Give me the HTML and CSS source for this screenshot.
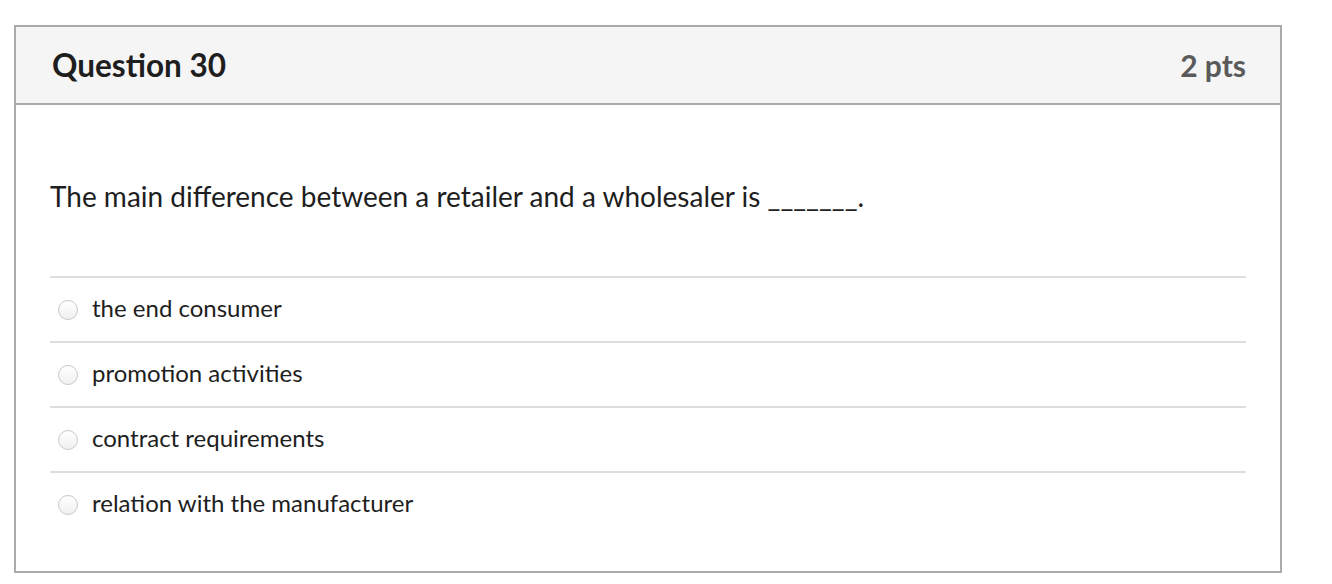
FILE: index.html
```html
<!DOCTYPE html>
<html lang="en">
<head>
<meta charset="utf-8">
<link rel="stylesheet" href="styles.css">
</head>
<body>
<div class="question">
  <div class="q-header">
    <div class="q-title">Question 30</div>
    <div class="q-points">2 pts</div>
  </div>
  <div class="q-body">
    <div class="q-text">The main difference between a retailer and a wholesaler is _______.</div>
    <div class="answers">
      <label class="answer"><span class="radio"></span><span class="answer-text">the end consumer</span></label>
      <label class="answer"><span class="radio"></span><span class="answer-text">promotion activities</span></label>
      <label class="answer"><span class="radio"></span><span class="answer-text">contract requirements</span></label>
      <label class="answer"><span class="radio"></span><span class="answer-text">relation with the manufacturer</span></label>
    </div>
  </div>
</div>
</body>
</html>
```
FILE: styles.css
```css
html, body {
  margin: 0;
  padding: 0;
  background: #ffffff;
}
body {
  font-family: Lato, "Open Sans", "Liberation Sans", sans-serif;
  color: #2d3b45;
}
.question {
  box-sizing: border-box;
  width: 1268px;
  height: 548px;
  margin: 25px 0 0 14px;
  border: 2px solid #aaaaaa;
  display: flex;
  flex-direction: column;
}
.q-header {
  height: 76px;
  background: #f5f5f5;
  border-bottom: 2px solid #aaaaaa;
  display: flex;
  align-items: center;
  justify-content: space-between;
  padding: 0 34px 0 36px;
}
.q-title {
  font-size: 31.5px;
  font-weight: 700;
  color: #1e1e1e;
}
.q-points {
  font-size: 30px;
  font-weight: 700;
  color: #5a5a5a;
}
.q-body {
  padding: 0 34px;
}
.q-text {
  font-size: 28px;
  color: #1e1e1e;
  line-height: 36px;
  padding-top: 73px;
  padding-bottom: 62px;
}
.answers {
  display: flex;
  flex-direction: column;
}
.answer {
  box-sizing: border-box;
  display: flex;
  align-items: center;
  height: 65px;
  padding-bottom: 4px;
  border-top: 2px solid #dddddd;
  color: #1e1e1e;
  font-size: 24px;
}
.radio {
  box-sizing: border-box;
  width: 20px;
  height: 20px;
  border-radius: 50%;
  border: 1px solid #c8c8c8;
  background: linear-gradient(#ffffff, #f0f0f0);
  margin: 4px 14px 0 8px;
  flex: none;
}
```
